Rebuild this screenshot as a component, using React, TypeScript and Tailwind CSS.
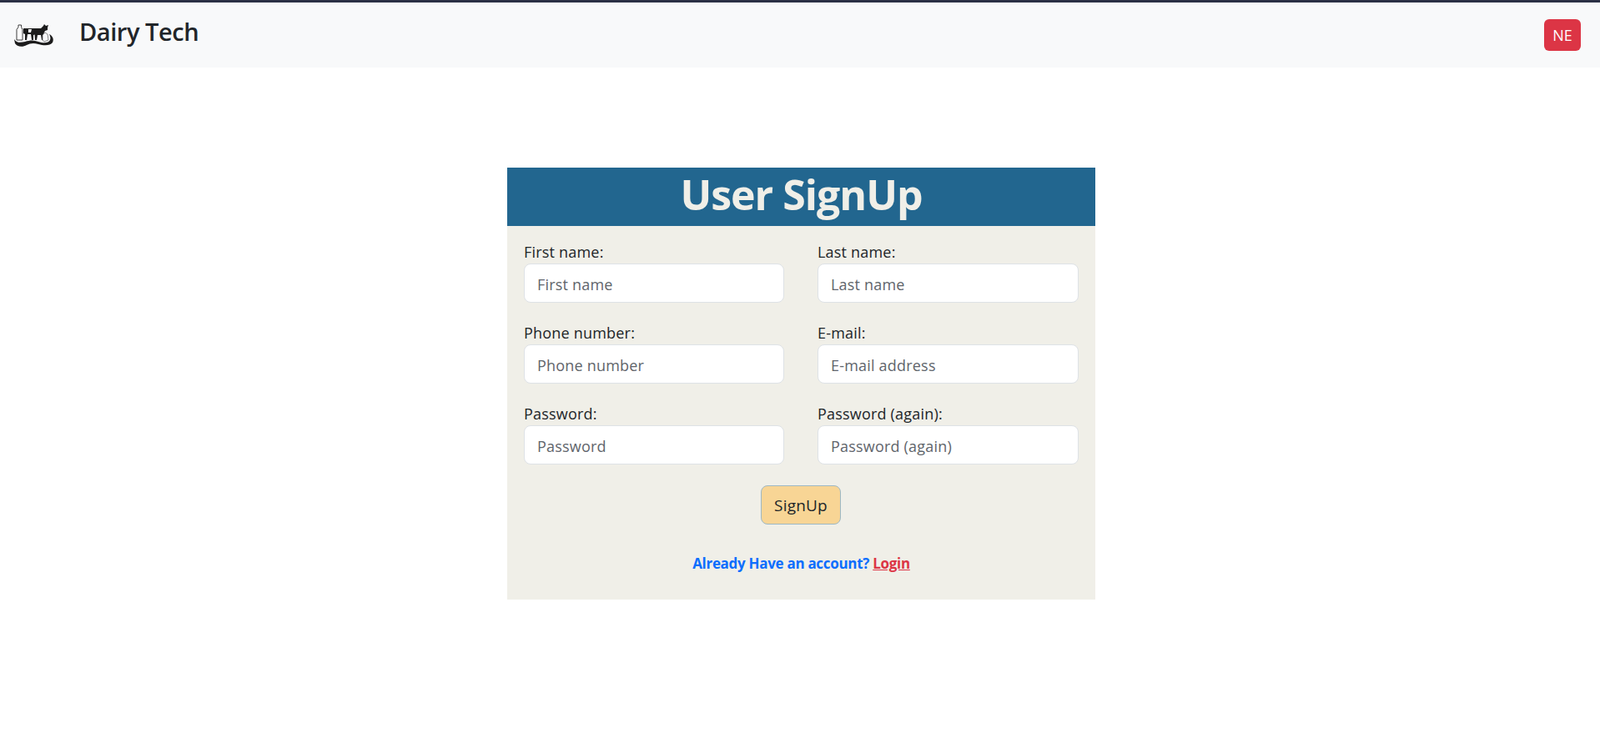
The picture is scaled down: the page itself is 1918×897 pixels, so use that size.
const font = "font-['Open_Sans','Noto_Sans',sans-serif]";

function Logo() {
  return (
    <svg width="50" height="32" viewBox="0 0 50 32" className="mt-[10px] block">
      <path d="M6 4h3.500v2.500l1.500 3V22H4V9.500l2-3z" fill="#fff" stroke="#3a3a3a" strokeWidth="1" />
      <path d="M12 8L26 8L27 15L24 16L24 22L22 22L21 15L17 15L16 22L14 22L14 15L12 14Z" fill="#1c1c1c" />
      <path d="M18 9L22 9L21 13L18 13Z" fill="#f8f9fa" />
      <path d="M25 8L33 8L36 5L37 3L39 5L42 4L41 7L41 10L38 11L36 15L36 22L34 22L33 16L29 16L28 22L26 22Z" fill="#1c1c1c" />
      <path d="M35 16L38 13L41 15L42 22L37 24L35 22Z" fill="#f8f9fa" stroke="#555" strokeWidth="0.7" />
      <path d="M1 21C4 26 9 25 14 24C20 22 25 22 30 24C36 26 42 26 44 22C45 19 44 17 43 15C47 17 49 21 47 25C44 29 37 29 30 27C24 25 20 26 16 28C11 31 4 30 2 26Z" fill="#1c1c1c" />
    </svg>
  );
}

function Field({ label, placeholder }: { label: string; placeholder: string }) {
  return (
    <div>
      <label className="block h-[25px] text-[18px] leading-[23px] tracking-[0.2px] text-[#212529]">{label}</label>
      <input
        readOnly
        placeholder={placeholder}
        className={`block h-[47px] w-full rounded-[8px] border border-[#dee2e6] bg-white px-[15px] pt-[2px] text-[18px] tracking-[0.2px] text-[#212529] outline-none placeholder:text-[#5f656b] ${font}`}
      />
    </div>
  );
}

export default function App() {
  return (
    <div className={`min-h-[897px] bg-white ${font}`}>
      <header className="flex h-[81px] items-center justify-between border-t-[3px] border-[#2b3045] bg-[#f8f9fa] pl-[16px] pr-[23px]">
        <div className="flex items-center pb-[10px]">
          <Logo />
          <span className="ml-[29px] text-[29px] font-semibold leading-none tracking-[-0.45px] text-[#212529]">Dairy Tech</span>
        </div>
        <button className="flex h-[38px] w-[44px] items-center justify-center rounded-[6px] bg-[#dc3545] text-[18px] text-white">NE</button>
      </header>

      <main className="flex justify-center pl-[3px] pt-[120px]">
        <section className="h-[518px] w-[705px] bg-[#f0efe8]">
          <h1 className="flex h-[70px] items-center justify-center bg-[#22668f] pb-[6px] text-[50px] font-bold tracking-[-1px] text-[#f0efe8]">User SignUp</h1>
          <form className="px-[20px] pt-[20px]">
            <div className="grid grid-cols-[312px_313px] justify-between gap-y-[25px]">
              <Field label="First name:" placeholder="First name" />
              <Field label="Last name:" placeholder="Last name" />
              <Field label="Phone number:" placeholder="Phone number" />
              <Field label="E-mail:" placeholder="E-mail address" />
              <Field label="Password:" placeholder="Password" />
              <Field label="Password (again):" placeholder="Password (again)" />
            </div>
            <div className="mt-[25px] flex justify-center pr-[1px]">
              <button type="button" className="h-[47px] w-[96px] rounded-[8px] border border-[#9db8c4] bg-[#f8d595] pt-[2px] text-[19px] tracking-[0.2px] text-[#212529]">SignUp</button>
            </div>
            <p className="mt-[35px] text-center text-[17px] font-bold leading-[24px] tracking-[-0.3px] text-[#0d6efd]">
              Already Have an account? <a className="text-[#dc3545] underline">Login</a>
            </p>
          </form>
        </section>
      </main>
    </div>
  );
}
